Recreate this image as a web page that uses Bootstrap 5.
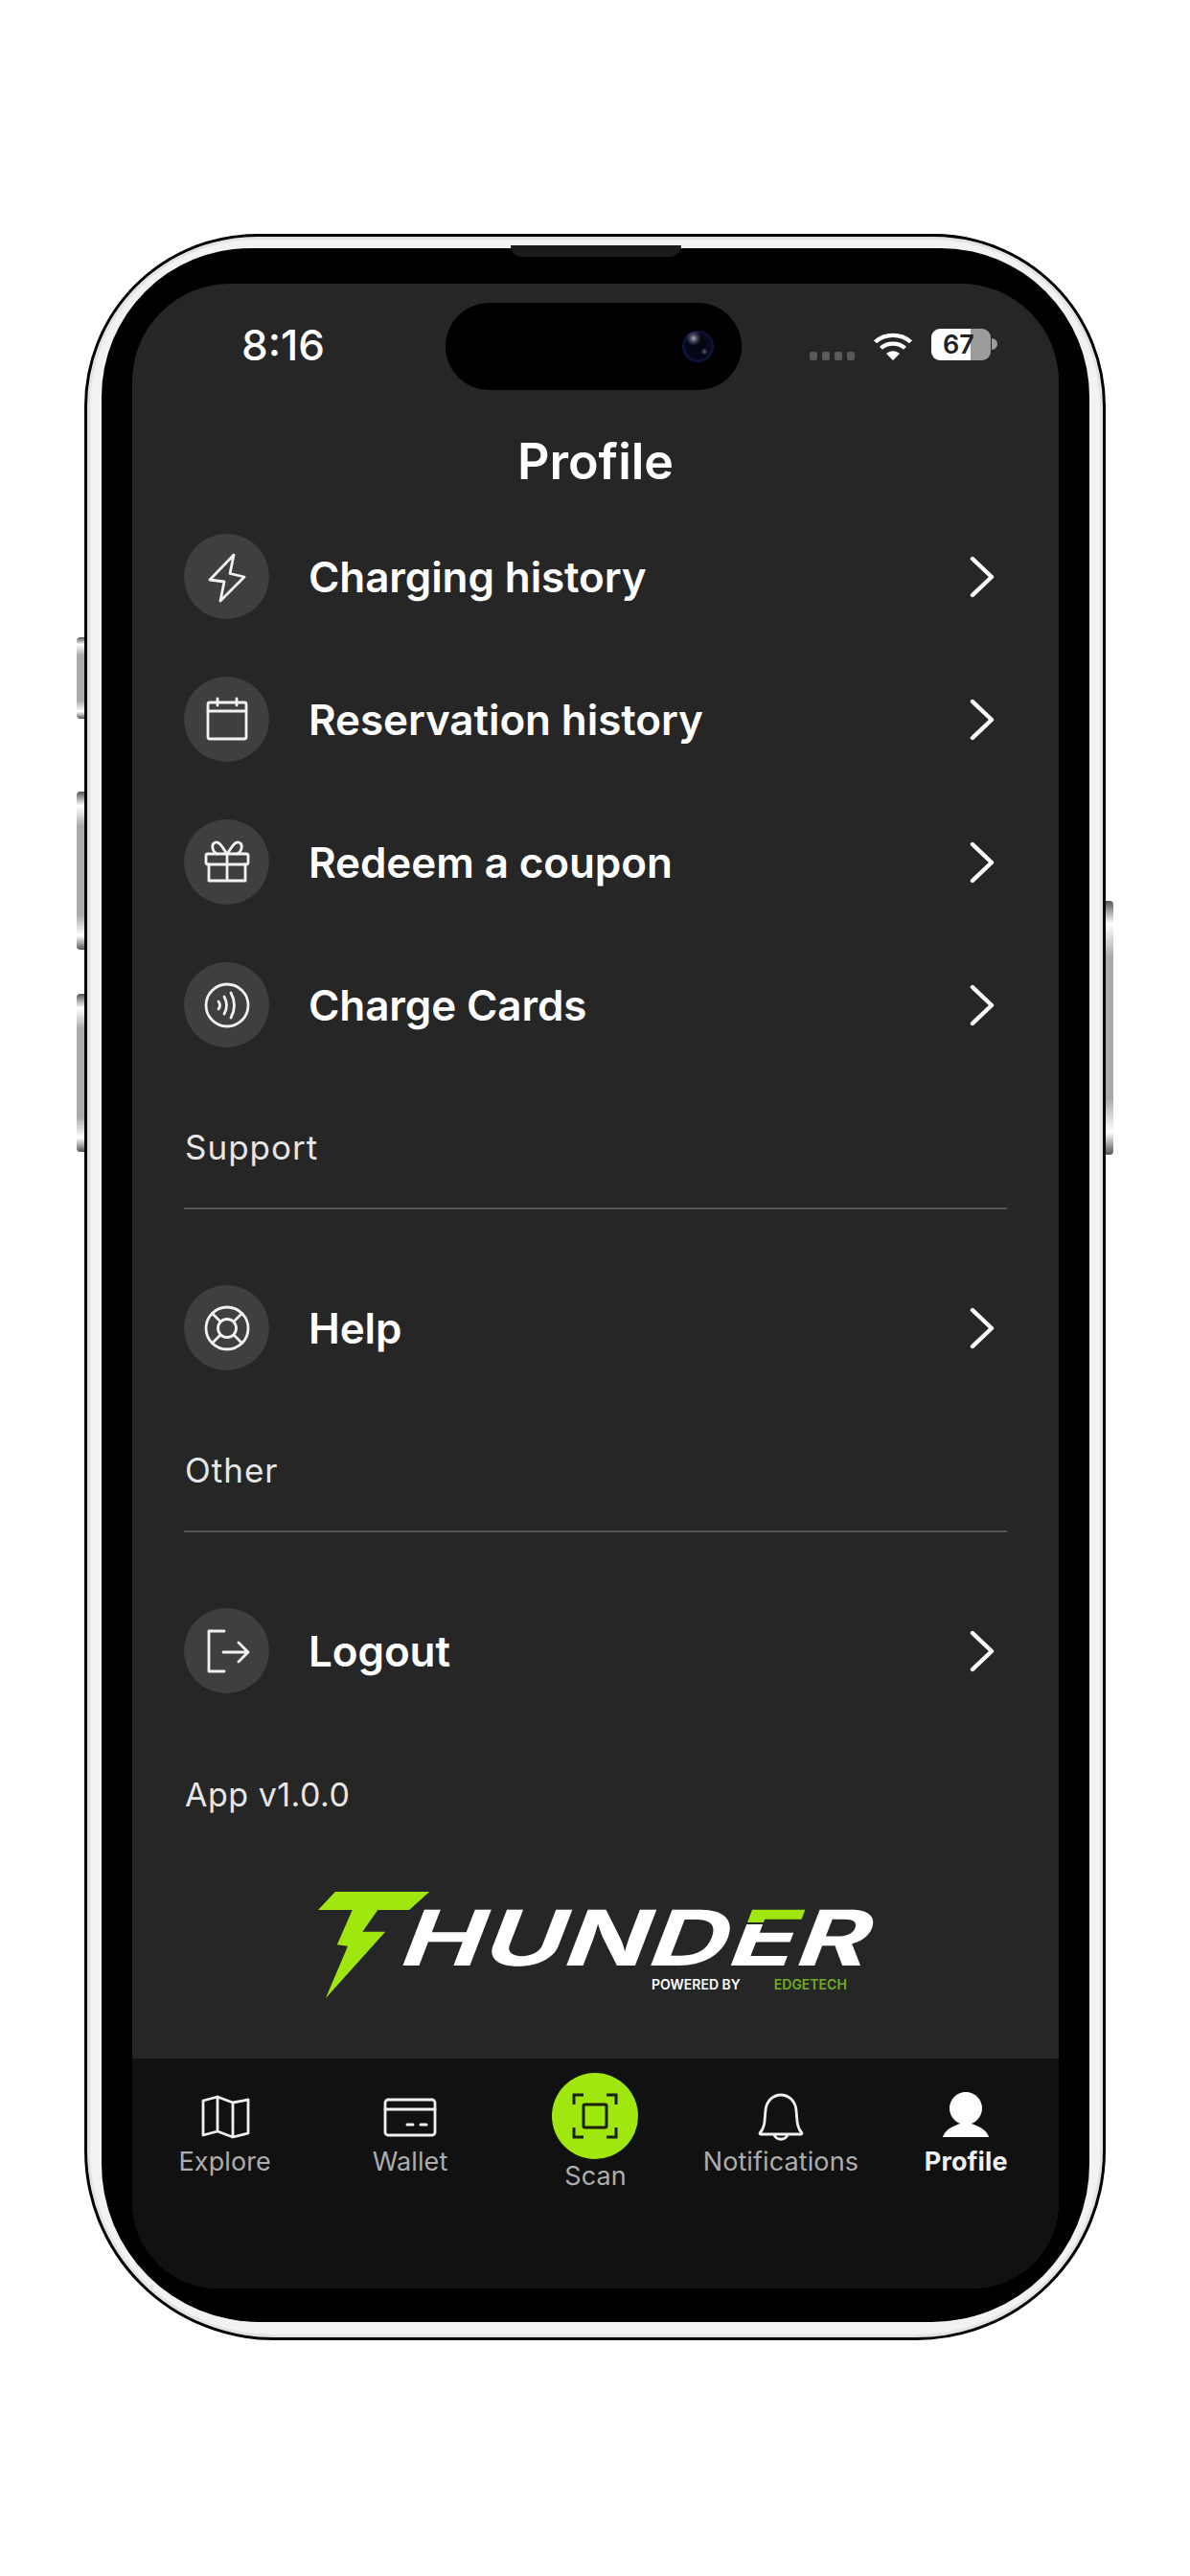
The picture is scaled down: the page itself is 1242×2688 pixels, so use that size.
<!DOCTYPE html>
<html lang="en">
<head>
<meta charset="utf-8">
<title>Profile</title>
<link href="https://cdn.jsdelivr.net/npm/bootstrap@5.3.0/dist/css/bootstrap.min.css" rel="stylesheet">
<style>
html,body{margin:0;background:#fff;font-family:Inter,"Liberation Sans",sans-serif;}
body{padding:244px 88px 0;height:2688px;overflow:hidden;}
.phone-shell{position:relative;width:1066px;height:2198px;background:#f1f3f3;border:3px solid #000;border-radius:180px 180px 198px 198px;padding:12px 14px 16px 15px;box-shadow:inset 0 0 0 3px #e4e3e4;}
.phone-bezel{height:100%;background:#000;border-radius:155px 155px 165px 165px;padding:37px 32px 35px 32px;}
.phone-screen{height:100%;background:#262626;border-radius:102px 102px 90px 90px;overflow:hidden;color:#fff;}
.side-key{position:absolute;width:8px;background:linear-gradient(180deg,#555 0,#fff 9%,#aaa 22%,#aaa 78%,#fff 91%,#555 100%);}
.key-l{left:-11px;border-radius:4px 0 0 4px;}
.key-r{right:-11px;border-radius:0 4px 4px 0;}
.key-a{top:418px;height:85px;}
.key-b{top:579px;height:165px;}
.key-c{top:790px;height:165px;}
.key-d{top:693px;height:265px;}
.speaker{position:absolute;top:9px;left:442px;width:178px;height:12px;background:#1b1b1b;border-radius:0 0 13px 13px;}
.status-area{height:111px;padding-top:20px;}
.status-side{width:327px;}
.status-time{font-size:44px;font-weight:500;line-height:88px;padding-right:12px;}
.island{width:309px;height:91px;background:#000;border-radius:46px;padding-right:29px;}
.lens{width:33px;height:33px;border-radius:50%;background:radial-gradient(circle at 36% 24%,#a8a8b4 0,rgba(120,120,150,.5) 12%,transparent 24%),radial-gradient(circle at 70% 66%,rgba(120,130,170,.7) 0,transparent 12%),radial-gradient(circle at 50% 50%,#03040a 0,#060818 52%,#1c2878 92%,#232f86 100%);}
.status-right{width:330px;padding-left:71px;padding-top:27px;}
.sig-row{gap:5px;margin-top:24px;margin-right:19px;}
.sig-dot{width:8px;height:9px;border-radius:2px;background:#5a5a5a;}
.wifi-ico{margin-top:1px;margin-right:19px;}
.batt{width:62px;height:33px;border-radius:9px;padding-right:5px;background:linear-gradient(90deg,#fff 0,#fff 66%,#9c9c9c 66%);color:#222;font-size:27px;font-weight:600;line-height:33px;text-align:center;}
.batt-nub{width:6px;height:12px;margin-top:10px;margin-left:1px;background:#9c9c9c;border-radius:0 6px 6px 0;}
.page-title{font-size:52px;font-weight:600;line-height:70px;padding:40px 0 10px;text-align:center;margin:0;}
.menu-pane{padding:0 54px;}
.menu-row{height:149px;color:#fff;text-decoration:none;background:transparent;border:0;padding:0 13px 0 0;}
.menu-row:hover{color:#fff;background:transparent;}
.round-ico{width:89px;height:89px;background:#3f3f3f;margin-right:41px;flex:none;}
.row-label{font-size:44px;font-weight:600;line-height:1;letter-spacing:-.1px;}
.ico-line{fill:none;stroke:#f2f2f2;stroke-width:2.8;stroke-linecap:round;stroke-linejoin:round;}
.sect-head{padding:54px 0 0 1px;margin-bottom:43px;font-size:35px;line-height:40px;letter-spacing:1px;color:#e6e6e6;}
.sect-rule{height:2px;background:#565656;margin-bottom:49px;}
.app-ver{padding:56px 0 0 1px;font-size:34px;line-height:40px;letter-spacing:.5px;color:#e6e6e6;}
.brand{margin:81px 0 0 140px;height:111px;}
.brand-bolt{flex:none;}
.brand-words{margin-left:-36px;padding-top:19px;}
.brand-name{display:block;font-size:80px;font-weight:700;line-height:58px;height:58px;letter-spacing:1px;white-space:nowrap;color:#fff;transform-origin:left bottom;transform:skewX(-21deg) scaleX(1.42);}
.brand-e{background:linear-gradient(180deg,#a0e60f 0,#a0e60f 33px,#262626 33px,#262626 35px,#fff 35px);-webkit-background-clip:text;background-clip:text;color:transparent;}
.brand-sub{font-size:14px;font-weight:600;line-height:16px;margin-top:12px;padding-left:267px;white-space:nowrap;}
.brand-sub span+span{color:#6fae1f;margin-left:35px;}
.tab-strip{height:240px;background:#111;}
.tab-cell{width:20%;color:#adadad;font-size:27px;letter-spacing:.1px;line-height:34px;text-decoration:none;padding-top:31px;text-align:center;white-space:nowrap;}
.tab-cell:hover{color:#adadad;}
.tab-ico{height:60px;}
.tab-cell.is-scan{padding-top:15px;}
.scan-disc{width:90px;height:90px;background:#a0e60f;}
.tab-cell.is-scan .tab-word{line-height:36px;display:block;}
.tab-cell.is-on{color:#f0f0f0;font-weight:700;}
.tab-line{fill:none;stroke:#f0f0f0;stroke-width:2.8;stroke-linecap:round;stroke-linejoin:round;}
</style>
</head>
<body>
<div class="phone-shell">
  <div class="side-key key-l key-a"></div>
  <div class="side-key key-l key-b"></div>
  <div class="side-key key-l key-c"></div>
  <div class="side-key key-r key-d"></div>
  <div class="speaker"></div>
  <div class="phone-bezel">
    <div class="phone-screen d-flex flex-column">
      <div class="status-area d-flex flex-shrink-0">
        <div class="status-side text-center status-time">8:16</div>
        <div class="island d-flex align-items-center justify-content-end"><div class="lens"></div></div>
        <div class="status-right d-flex align-items-start">
          <div class="sig-row d-flex"><i class="sig-dot"></i><i class="sig-dot"></i><i class="sig-dot"></i><i class="sig-dot"></i></div>
          <svg class="wifi-ico" width="42" height="32" viewBox="0 0 42 34" preserveAspectRatio="none"><path d="M21 34 14 26.500a10 10 0 0 1 14 0Z" fill="#fff"/><path d="M8.500 20.500a18 18 0 0 1 25 0" fill="none" stroke="#fff" stroke-width="4.600"/><path d="M2.500 13.500a27 27 0 0 1 37 0" fill="none" stroke="#fff" stroke-width="4.600"/></svg>
          <div class="batt">67</div>
          <div class="batt-nub"></div>
        </div>
      </div>
      <div class="flex-grow-1">
        <h1 class="page-title">Profile</h1>
        <div class="menu-pane">
          <div class="list-group list-group-flush">
            <a href="#" class="list-group-item menu-row d-flex align-items-center">
              <span class="round-ico rounded-circle d-flex align-items-center justify-content-center"><svg width="60" height="60" viewBox="-30 -30 60 60"><path class="ico-line" d="M7-23-18 3-3 5-7 25 18 0 3-3.500Z"/></svg></span>
              <span class="row-label flex-grow-1">Charging history</span>
              <svg width="26" height="44" viewBox="0 0 26 44"><path d="M3 3 23 22 3 41" fill="none" stroke="#fff" stroke-width="4.400" stroke-linecap="round" stroke-linejoin="round"/></svg>
            </a>
            <a href="#" class="list-group-item menu-row d-flex align-items-center">
              <span class="round-ico rounded-circle d-flex align-items-center justify-content-center"><svg width="60" height="60" viewBox="-30 -30 60 60"><rect class="ico-line" x="-20" y="-18" width="40" height="38" rx="2"/><path class="ico-line" d="M-20-9H20M-10-22V-15M10-22V-15"/></svg></span>
              <span class="row-label flex-grow-1">Reservation history</span>
              <svg width="26" height="44" viewBox="0 0 26 44"><path d="M3 3 23 22 3 41" fill="none" stroke="#fff" stroke-width="4.400" stroke-linecap="round" stroke-linejoin="round"/></svg>
            </a>
            <a href="#" class="list-group-item menu-row d-flex align-items-center">
              <span class="round-ico rounded-circle d-flex align-items-center justify-content-center"><svg width="60" height="60" viewBox="-30 -30 60 60"><rect class="ico-line" x="-22" y="-9" width="44" height="11" rx="2"/><path class="ico-line" d="M-19 2V19H19V2M0-9V19M0-9C-4-14-7-22-12-21-17-20-16-11-10-9M0-9C4-14 7-22 12-21 17-20 16-11 10-9"/></svg></span>
              <span class="row-label flex-grow-1">Redeem a coupon</span>
              <svg width="26" height="44" viewBox="0 0 26 44"><path d="M3 3 23 22 3 41" fill="none" stroke="#fff" stroke-width="4.400" stroke-linecap="round" stroke-linejoin="round"/></svg>
            </a>
            <a href="#" class="list-group-item menu-row d-flex align-items-center">
              <span class="round-ico rounded-circle d-flex align-items-center justify-content-center"><svg width="60" height="60" viewBox="-30 -30 60 60"><circle class="ico-line" r="22"/><path class="ico-line" d="M-9-4Q-6 0-9 4M-3-9Q2 0-3 9M4-13Q11 0 4 13"/></svg></span>
              <span class="row-label flex-grow-1">Charge Cards</span>
              <svg width="26" height="44" viewBox="0 0 26 44"><path d="M3 3 23 22 3 41" fill="none" stroke="#fff" stroke-width="4.400" stroke-linecap="round" stroke-linejoin="round"/></svg>
            </a>
          </div>
          <div class="sect-head">Support</div>
          <div class="sect-rule"></div>
          <div class="list-group list-group-flush">
            <a href="#" class="list-group-item menu-row d-flex align-items-center">
              <span class="round-ico rounded-circle d-flex align-items-center justify-content-center"><svg width="60" height="60" viewBox="-30 -30 60 60"><circle class="ico-line" r="22"/><circle class="ico-line" r="9.500"/><path class="ico-line" d="M-7-7-15.500-15.500M7-7 15.500-15.500M-7 7-15.500 15.500M7 7 15.500 15.500"/></svg></span>
              <span class="row-label flex-grow-1">Help</span>
              <svg width="26" height="44" viewBox="0 0 26 44"><path d="M3 3 23 22 3 41" fill="none" stroke="#fff" stroke-width="4.400" stroke-linecap="round" stroke-linejoin="round"/></svg>
            </a>
          </div>
          <div class="sect-head">Other</div>
          <div class="sect-rule"></div>
          <div class="list-group list-group-flush">
            <a href="#" class="list-group-item menu-row d-flex align-items-center">
              <span class="round-ico rounded-circle d-flex align-items-center justify-content-center"><svg width="60" height="60" viewBox="-30 -30 60 60"><path class="ico-line" d="M-3-21H-19V21H-3M-4 1H22M12-9 22 1 12 11"/></svg></span>
              <span class="row-label flex-grow-1">Logout</span>
              <svg width="26" height="44" viewBox="0 0 26 44"><path d="M3 3 23 22 3 41" fill="none" stroke="#fff" stroke-width="4.400" stroke-linecap="round" stroke-linejoin="round"/></svg>
            </a>
          </div>
          <div class="app-ver">App v1.0.0</div>
          <div class="brand d-flex">
            <svg class="brand-bolt" width="117" height="111" viewBox="55 100 295 332" preserveAspectRatio="none"><path fill="#a0e60f" d="M55 157 100 100H348L295 157H212L172 225H232L75 432 133 270 105 265 145 157Z"/></svg>
            <div class="brand-words">
              <span class="brand-name">HUND<span class="brand-e">E</span>R</span>
              <div class="brand-sub"><span>POWERED BY</span><span>EDGETECH</span></div>
            </div>
          </div>
        </div>
      </div>
      <nav class="tab-strip d-flex flex-shrink-0">
        <a href="#" class="tab-cell">
          <div class="tab-ico d-flex align-items-center justify-content-center"><svg width="56" height="52" viewBox="-28 -26 56 52"><path class="tab-line" d="M-23-17-8-21 8-15 24-18V17L8 21-8 15-23 19ZM-8-21V15M8-15V21"/></svg></div>
          <span class="tab-word">Explore</span>
        </a>
        <a href="#" class="tab-cell">
          <div class="tab-ico d-flex align-items-center justify-content-center"><svg width="58" height="44" viewBox="-29 -22 58 44"><rect class="tab-line" x="-26" y="-18" width="52" height="37" rx="3"/><path class="tab-line" d="M-26-8H26"/><path d="M-3 8H3M11 8H17" stroke="#f0f0f0" stroke-width="3" stroke-linecap="round"/></svg></div>
          <span class="tab-word">Wallet</span>
        </a>
        <a href="#" class="tab-cell is-scan">
          <div class="d-flex justify-content-center"><span class="scan-disc rounded-circle d-flex align-items-center justify-content-center"><svg width="56" height="56" viewBox="-28 -28 56 56"><path d="M-22-12V-22H-12M12-22H22V-12M22 12V22H12M-12 22H-22V12" fill="none" stroke="#16210a" stroke-width="3"/><rect x="-12" y="-12" width="24" height="24" rx="1.500" fill="none" stroke="#16210a" stroke-width="3"/></svg></span></div>
          <span class="tab-word">Scan</span>
        </a>
        <a href="#" class="tab-cell">
          <div class="tab-ico d-flex align-items-center justify-content-center"><svg width="52" height="52" viewBox="-26 -26 52 52"><path class="tab-line" d="M-22 17C-16 10-17 2-16-7-15-18-7-23 0-23S15-18 16-7C17 2 16 10 22 17Q22 18 21 18H-21Q-22 18-22 17ZM-7 18C-6 25 6 25 7 18"/></svg></div>
          <span class="tab-word">Notifications</span>
        </a>
        <a href="#" class="tab-cell is-on">
          <div class="tab-ico d-flex align-items-center justify-content-center"><svg width="52" height="52" viewBox="-26 -26 52 52"><circle cx="0" cy="-9" r="17" fill="#fff"/><path d="M-24 21C-22 13-12 9-6 7H6C12 9 22 13 24 21Z" fill="#fff"/></svg></div>
          <span class="tab-word">Profile</span>
        </a>
      </nav>
    </div>
  </div>
</div>
<script src="https://cdn.jsdelivr.net/npm/bootstrap@5.3.0/dist/js/bootstrap.bundle.min.js"></script>
</body>
</html>
